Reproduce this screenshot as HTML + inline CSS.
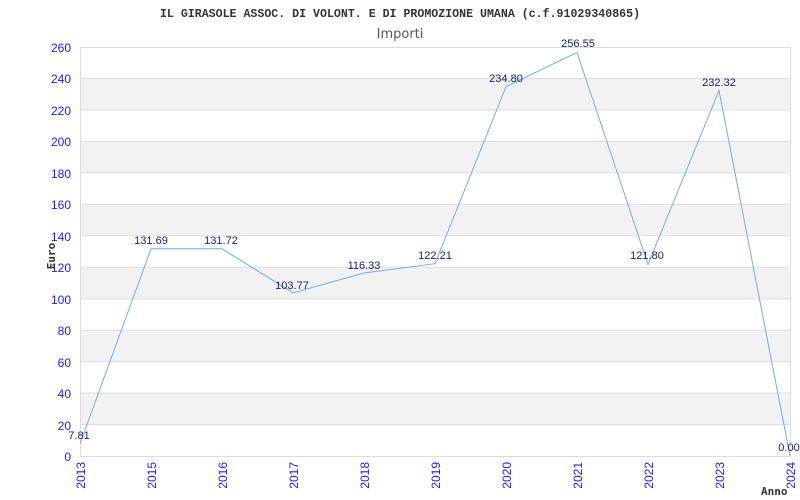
<!DOCTYPE html>
<html><head><style>body{margin:0;background:#fff}svg{display:block}</style></head><body>
<svg width="800" height="500" xmlns="http://www.w3.org/2000/svg" font-family="Liberation Sans, sans-serif">
<rect width="800" height="500" fill="#fff"/>
<g fill="#f2f2f2">
<rect x="80" y="78.5" width="710" height="31.5"/>
<rect x="80" y="141.4" width="710" height="31.5"/>
<rect x="80" y="204.3" width="710" height="31.5"/>
<rect x="80" y="267.2" width="710" height="31.5"/>
<rect x="80" y="330.2" width="710" height="31.5"/>
<rect x="80" y="393.1" width="710" height="31.5"/>
</g>
<g stroke="#dcdcdc" stroke-width="1" fill="none">
<path d="M80 78.5H790M80 110H790M80 141.4H790M80 172.9H790M80 204.3H790M80 235.8H790M80 267.2H790M80 298.7H790M80 330.2H790M80 361.6H790M80 393.1H790M80 424.6H790"/>
<path d="M80.5 47V456.5H790.5V47M80 47.5H790"/>
</g>
<text x="400" y="17" text-anchor="middle" font-family="Liberation Mono, monospace" font-weight="bold" font-size="11.6" fill="#333">IL GIRASOLE ASSOC. DI VOLONT. E DI PROMOZIONE UMANA (c.f.91029340865)</text>
<text x="400" y="38" text-anchor="middle" font-family="DejaVu Sans, sans-serif" font-size="13" fill="#555">Importi</text>
<g fill="#1a1aff" font-size="12" text-anchor="end">
<text x="71" y="52">260</text><text x="71" y="83">240</text><text x="71" y="115">220</text><text x="71" y="146">200</text><text x="71" y="178">180</text><text x="71" y="209">160</text><text x="71" y="241">140</text><text x="71" y="272">120</text><text x="71" y="304">100</text><text x="71" y="335">80</text><text x="71" y="367">60</text><text x="71" y="398">40</text><text x="71" y="430">20</text><text x="71" y="461">0</text>
</g>
<g fill="#1a1aff" font-size="12" text-anchor="end">
<text transform="translate(85,462) rotate(-90)">2013</text>
<text transform="translate(156,462) rotate(-90)">2015</text>
<text transform="translate(227,462) rotate(-90)">2016</text>
<text transform="translate(298,462) rotate(-90)">2017</text>
<text transform="translate(369,462) rotate(-90)">2018</text>
<text transform="translate(440,462) rotate(-90)">2019</text>
<text transform="translate(511,462) rotate(-90)">2020</text>
<text transform="translate(582,462) rotate(-90)">2021</text>
<text transform="translate(653,462) rotate(-90)">2022</text>
<text transform="translate(724,462) rotate(-90)">2023</text>
<text transform="translate(795,462) rotate(-90)">2024</text>
</g>
<text transform="translate(55,256) rotate(-90)" text-anchor="middle" font-family="DejaVu Sans Mono, monospace" font-weight="bold" font-size="11" fill="#333">Euro</text>
<text x="761" y="495" font-family="DejaVu Sans Mono, monospace" font-weight="bold" font-size="11" fill="#333">Anno</text>
<polyline fill="none" stroke="#6aaef0" stroke-width="1" points="80,443.7 151,248.8 222,248.8 293,292.8 364,273 435,263.7 506,86.6 577,52.4 648,264.4 719,90.5 790,456"/>
<g fill="#1a1a70" font-size="11" text-anchor="middle">
<text x="79" y="439">7.81</text>
<text x="151" y="244">131.69</text>
<text x="221" y="244">131.72</text>
<text x="292" y="289">103.77</text>
<text x="364" y="269">116.33</text>
<text x="435" y="259">122.21</text>
<text x="506" y="82">234.80</text>
<text x="578" y="47">256.55</text>
<text x="647" y="259">121.80</text>
<text x="719" y="86">232.32</text>
<text x="789" y="451">0.00</text>
</g>
</svg>
</body></html>
